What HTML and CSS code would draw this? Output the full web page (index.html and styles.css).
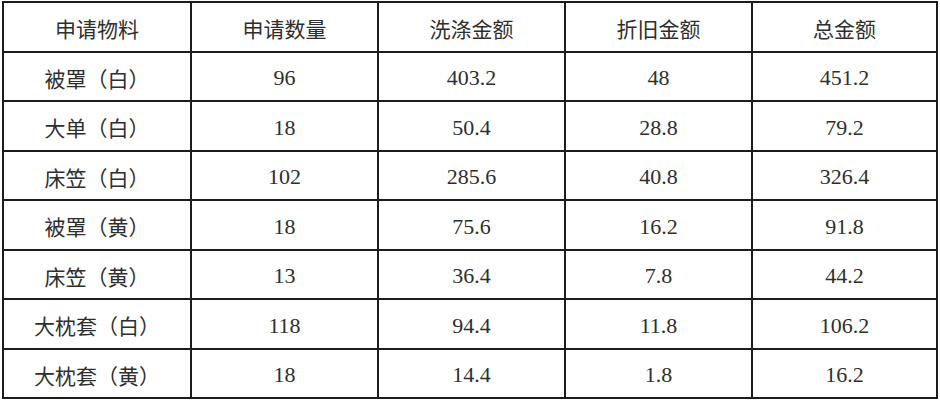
FILE: index.html
```html
<!DOCTYPE html>
<html>
<head>
<meta charset="utf-8">
<title>申请物料</title>
<link rel="stylesheet" href="styles.css">
</head>
<body>
<div class="grid">
  <div class="cell">申请物料</div><div class="cell">申请数量</div><div class="cell">洗涤金额</div><div class="cell">折旧金额</div><div class="cell">总金额</div>
  <div class="cell">被罩（白）</div><div class="cell"><span class="num">96</span></div><div class="cell"><span class="num">403.2</span></div><div class="cell"><span class="num">48</span></div><div class="cell"><span class="num">451.2</span></div>
  <div class="cell">大单（白）</div><div class="cell"><span class="num">18</span></div><div class="cell"><span class="num">50.4</span></div><div class="cell"><span class="num">28.8</span></div><div class="cell"><span class="num">79.2</span></div>
  <div class="cell">床笠（白）</div><div class="cell"><span class="num">102</span></div><div class="cell"><span class="num">285.6</span></div><div class="cell"><span class="num">40.8</span></div><div class="cell"><span class="num">326.4</span></div>
  <div class="cell">被罩（黄）</div><div class="cell"><span class="num">18</span></div><div class="cell"><span class="num">75.6</span></div><div class="cell"><span class="num">16.2</span></div><div class="cell"><span class="num">91.8</span></div>
  <div class="cell">床笠（黄）</div><div class="cell"><span class="num">13</span></div><div class="cell"><span class="num">36.4</span></div><div class="cell"><span class="num">7.8</span></div><div class="cell"><span class="num">44.2</span></div>
  <div class="cell">大枕套（白）</div><div class="cell"><span class="num">118</span></div><div class="cell"><span class="num">94.4</span></div><div class="cell"><span class="num">11.8</span></div><div class="cell"><span class="num">106.2</span></div>
  <div class="cell">大枕套（黄）</div><div class="cell"><span class="num">18</span></div><div class="cell"><span class="num">14.4</span></div><div class="cell"><span class="num">1.8</span></div><div class="cell"><span class="num">16.2</span></div>
</div>
</body>
</html>
```
FILE: styles.css
```css
html, body {
  margin: 0;
  padding: 0;
  background: #fff;
}
body {
  padding: 1px 2px;
}
.grid {
  display: grid;
  grid-template-columns: 186px 185px 185px 185px 183px;
  grid-template-rows: repeat(8, 1fr);
  gap: 2px;
  padding: 2px;
  width: 936px;
  height: 398px;
  box-sizing: border-box;
  background: #1c1c1c;
}
.cell {
  background: #fff;
  display: flex;
  align-items: center;
  justify-content: center;
  padding-top: 4px;
  box-sizing: border-box;
  font-family: "Noto Sans CJK SC", sans-serif;
  font-size: 21px;
  line-height: 1;
  color: #2e2e2e;
}
.num {
  font-family: "Liberation Serif";
  font-size: 22px;
}
```
